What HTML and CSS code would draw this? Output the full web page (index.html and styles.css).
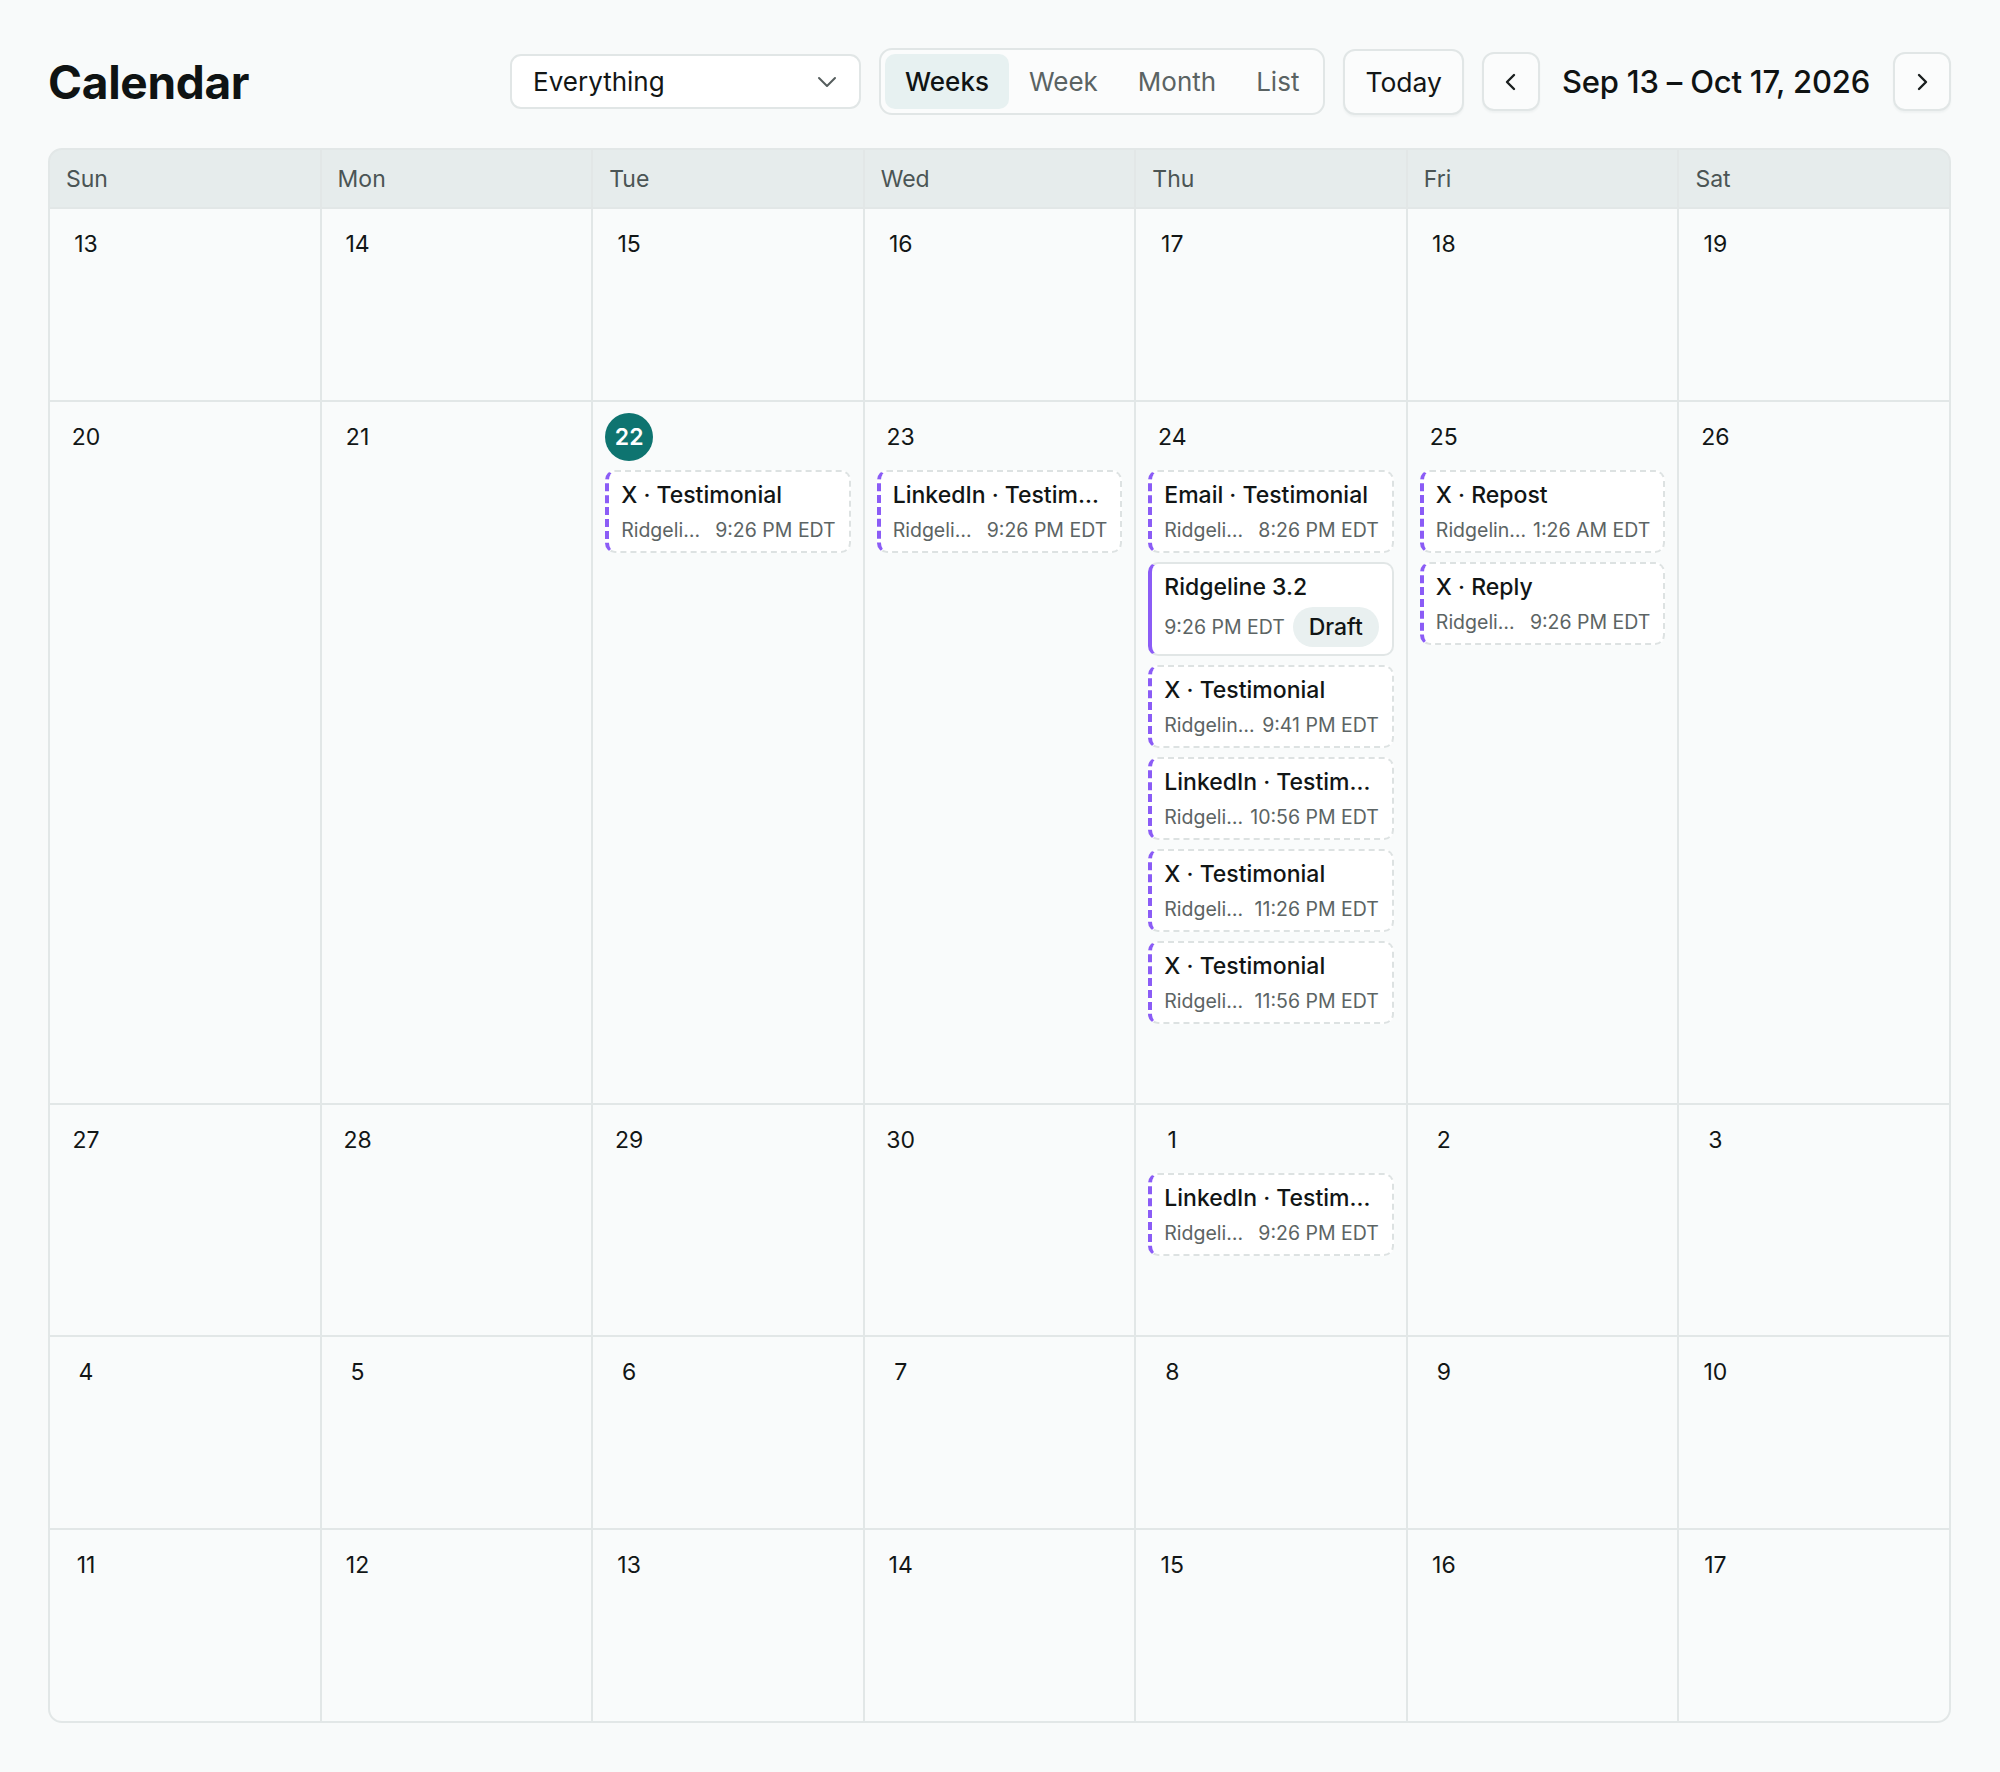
FILE: index.html
```html
<!DOCTYPE html>
<html lang="en">
<head>
<meta charset="utf-8">
<title>Calendar</title>
<link rel="stylesheet" href="styles.css">
</head>
<body>
<div class="page">
  <header class="topbar">
    <h1 class="title">Calendar</h1>
    <div class="controls">
      <button class="select">
        <span>Everything</span>
        <svg class="select-chev" width="20" height="12" viewBox="0 0 20 12"><path d="M2 2 L10 10 L18 2" fill="none" stroke="#555d5d" stroke-width="2" stroke-linecap="round" stroke-linejoin="round"/></svg>
      </button>
      <div class="segmented">
        <span class="seg active">Weeks</span>
        <span class="seg">Week</span>
        <span class="seg">Month</span>
        <span class="seg">List</span>
      </div>
      <button class="btn today">Today</button>
      <div class="nav">
        <button class="btn icon-btn" aria-label="Previous">
          <svg width="20" height="22" viewBox="0 0 20 22"><path d="M13 4 L6 11 L13 18" fill="none" stroke="#1a1f1f" stroke-width="2.4" stroke-linecap="round" stroke-linejoin="round"/></svg>
        </button>
        <span class="range">Sep 13 – Oct 17, 2026</span>
        <button class="btn icon-btn" aria-label="Next">
          <svg width="20" height="22" viewBox="0 0 20 22"><path d="M7 4 L14 11 L7 18" fill="none" stroke="#1a1f1f" stroke-width="2.4" stroke-linecap="round" stroke-linejoin="round"/></svg>
        </button>
      </div>
    </div>
  </header>

  <div class="grid">
    <div class="dow">Sun</div><div class="dow">Mon</div><div class="dow">Tue</div><div class="dow">Wed</div><div class="dow">Thu</div><div class="dow">Fri</div><div class="dow">Sat</div>

    <div class="cell"><div class="num">13</div></div>
    <div class="cell"><div class="num">14</div></div>
    <div class="cell"><div class="num">15</div></div>
    <div class="cell"><div class="num">16</div></div>
    <div class="cell"><div class="num">17</div></div>
    <div class="cell"><div class="num">18</div></div>
    <div class="cell"><div class="num">19</div></div>

    <div class="cell"><div class="num">20</div></div>
    <div class="cell"><div class="num">21</div></div>
    <div class="cell">
      <div class="num today-num">22</div>
      <div class="events">
        <div class="ev"><div class="ev-title">X · Testimonial</div><div class="ev-sub"><span class="ev-name">Ridgeline Outfitters</span><span class="ev-time">9:26 PM EDT</span></div></div>
      </div>
    </div>
    <div class="cell">
      <div class="num">23</div>
      <div class="events">
        <div class="ev"><div class="ev-title">LinkedIn · Testimonial</div><div class="ev-sub"><span class="ev-name">Ridgeline Outfitters</span><span class="ev-time">9:26 PM EDT</span></div></div>
      </div>
    </div>
    <div class="cell">
      <div class="num">24</div>
      <div class="events">
        <div class="ev"><div class="ev-title">Email · Testimonial</div><div class="ev-sub"><span class="ev-name">Ridgeline Outfitters</span><span class="ev-time">8:26 PM EDT</span></div></div>
        <div class="ev draft"><div class="ev-title">Ridgeline 3.2</div><div class="ev-sub draft-sub"><span class="ev-time-left">9:26 PM EDT</span><span class="badge">Draft</span></div></div>
        <div class="ev"><div class="ev-title">X · Testimonial</div><div class="ev-sub"><span class="ev-name">Ridgeline Outfitters</span><span class="ev-time">9:41 PM EDT</span></div></div>
        <div class="ev"><div class="ev-title">LinkedIn · Testimonial</div><div class="ev-sub"><span class="ev-name">Ridgeline Outfitters</span><span class="ev-time">10:56 PM EDT</span></div></div>
        <div class="ev"><div class="ev-title">X · Testimonial</div><div class="ev-sub"><span class="ev-name">Ridgeline Outfitters</span><span class="ev-time">11:26 PM EDT</span></div></div>
        <div class="ev"><div class="ev-title">X · Testimonial</div><div class="ev-sub"><span class="ev-name">Ridgeline Outfitters</span><span class="ev-time">11:56 PM EDT</span></div></div>
      </div>
    </div>
    <div class="cell">
      <div class="num">25</div>
      <div class="events">
        <div class="ev"><div class="ev-title">X · Repost</div><div class="ev-sub"><span class="ev-name">Ridgeline Outfitters</span><span class="ev-time">1:26 AM EDT</span></div></div>
        <div class="ev"><div class="ev-title">X · Reply</div><div class="ev-sub"><span class="ev-name">Ridgeline Outfitters</span><span class="ev-time">9:26 PM EDT</span></div></div>
      </div>
    </div>
    <div class="cell"><div class="num">26</div></div>

    <div class="cell"><div class="num">27</div></div>
    <div class="cell"><div class="num">28</div></div>
    <div class="cell"><div class="num">29</div></div>
    <div class="cell"><div class="num">30</div></div>
    <div class="cell">
      <div class="num">1</div>
      <div class="events">
        <div class="ev"><div class="ev-title">LinkedIn · Testimonial</div><div class="ev-sub"><span class="ev-name">Ridgeline Outfitters</span><span class="ev-time">9:26 PM EDT</span></div></div>
      </div>
    </div>
    <div class="cell"><div class="num">2</div></div>
    <div class="cell"><div class="num">3</div></div>

    <div class="cell"><div class="num">4</div></div>
    <div class="cell"><div class="num">5</div></div>
    <div class="cell"><div class="num">6</div></div>
    <div class="cell"><div class="num">7</div></div>
    <div class="cell"><div class="num">8</div></div>
    <div class="cell"><div class="num">9</div></div>
    <div class="cell"><div class="num">10</div></div>

    <div class="cell"><div class="num">11</div></div>
    <div class="cell"><div class="num">12</div></div>
    <div class="cell"><div class="num">13</div></div>
    <div class="cell"><div class="num">14</div></div>
    <div class="cell"><div class="num">15</div></div>
    <div class="cell"><div class="num">16</div></div>
    <div class="cell"><div class="num">17</div></div>
  </div>
</div>
</body>
</html>
```

FILE: styles.css
```css
* { box-sizing: border-box; }

html, body {
  margin: 0;
  padding: 0;
  background: #f8fafa;
  font-family: Inter, "Noto Sans", "Liberation Sans", sans-serif;
  color: #121616;
}

.page {
  padding: 48px 49px 40px 48px;
}

.topbar {
  display: flex;
  align-items: center;
  height: 67px;
  margin-bottom: 33px;
}

.title {
  margin: 0;
  font-size: 46px;
  font-weight: 700;
  letter-spacing: -0.3px;
  color: #0f1313;
}

.controls {
  margin-left: auto;
  display: flex;
  align-items: center;
  gap: 18px;
}

button {
  font-family: inherit;
  cursor: pointer;
}

.select {
  width: 351px;
  height: 55px;
  display: flex;
  align-items: center;
  justify-content: space-between;
  padding: 0 22px 0 21px;
  background: #ffffff;
  border: 2px solid #e1e6e6;
  border-radius: 11px;
  font-size: 26px;
  color: #121616;
}

.select-chev { display: block; }

.segmented {
  display: flex;
  height: 67px;
  padding: 4px;
  border: 2px solid #e1e6e6;
  border-radius: 13px;
  background: #fbfcfc;
}

.seg {
  display: flex;
  align-items: center;
  padding: 0 20px;
  font-size: 26px;
  color: #5a6363;
  border-radius: 10px;
}

.seg.active {
  background: #e7f1f1;
  color: #101414;
  font-weight: 500;
}

.btn {
  background: #fbfcfc;
  border: 2px solid #e1e6e6;
  border-radius: 12px;
  color: #121616;
  box-shadow: 0 2px 2px rgba(20, 40, 40, 0.04);
}

.today {
  height: 66px;
  padding: 0 20px;
  font-size: 26.5px;
}

.nav {
  display: flex;
  align-items: center;
}

.icon-btn {
  width: 58px;
  height: 59px;
  padding: 0;
  display: flex;
  align-items: center;
  justify-content: center;
}

.range {
  margin: 0 23px 0 22px;
  font-size: 31px;
  font-weight: 500;
  letter-spacing: -0.2px;
  color: #0f1313;
  white-space: nowrap;
}

.grid {
  display: grid;
  grid-template-columns: repeat(7, 1fr);
  gap: 2px;
  background: #e2e7e7;
  border: 2px solid #e2e7e7;
  border-radius: 14px;
  overflow: hidden;
}

.dow {
  height: 57px;
  display: flex;
  align-items: center;
  padding-left: 16px;
  background: #e6ecec;
  font-size: 23px;
  color: #4b5555;
}

.cell {
  min-height: 191px;
  padding: 11px 12px 12px 12px;
  background: #f9fbfb;
  min-width: 0;
}

.num {
  width: 48px;
  height: 48px;
  display: flex;
  align-items: center;
  justify-content: center;
  font-size: 23px;
  color: #121616;
}

.today-num {
  background: #0e7470;
  color: #ffffff;
  border-radius: 50%;
  font-weight: 600;
}

.events {
  margin-top: 9px;
  padding-bottom: 67px;
  display: flex;
  flex-direction: column;
  gap: 9px;
}

.ev {
  background: #ffffff;
  border: 2px dashed #dde2e2;
  border-left: 4px dashed #8b5cf6;
  border-radius: 10px;
  padding: 8px 13px 7px 12px;
  min-width: 0;
}

.ev.draft {
  border: 2px solid #e1e6e6;
  border-left: 4px solid #8b5cf6;
}

.ev-title {
  font-size: 23px;
  line-height: 30px;
  font-weight: 500;
  color: #111515;
  white-space: nowrap;
  overflow: hidden;
  text-overflow: ellipsis;
}

.ev-sub {
  margin-top: 6px;
  display: flex;
  align-items: center;
  gap: 6px;
  font-size: 19.5px;
  line-height: 28px;
  color: #5c6464;
}

.ev-name {
  flex: 1;
  min-width: 0;
  white-space: nowrap;
  overflow: hidden;
  text-overflow: ellipsis;
}

.ev-time {
  white-space: nowrap;
}

.draft-sub {
  margin-top: 5px;
  justify-content: space-between;
}

.ev-time-left { white-space: nowrap; }

.badge {
  height: 40px;
  display: flex;
  align-items: center;
  padding: 0 16px;
  border-radius: 20px;
  background: #e9f0f0;
  font-size: 23px;
  font-weight: 500;
  color: #111515;
}
```
